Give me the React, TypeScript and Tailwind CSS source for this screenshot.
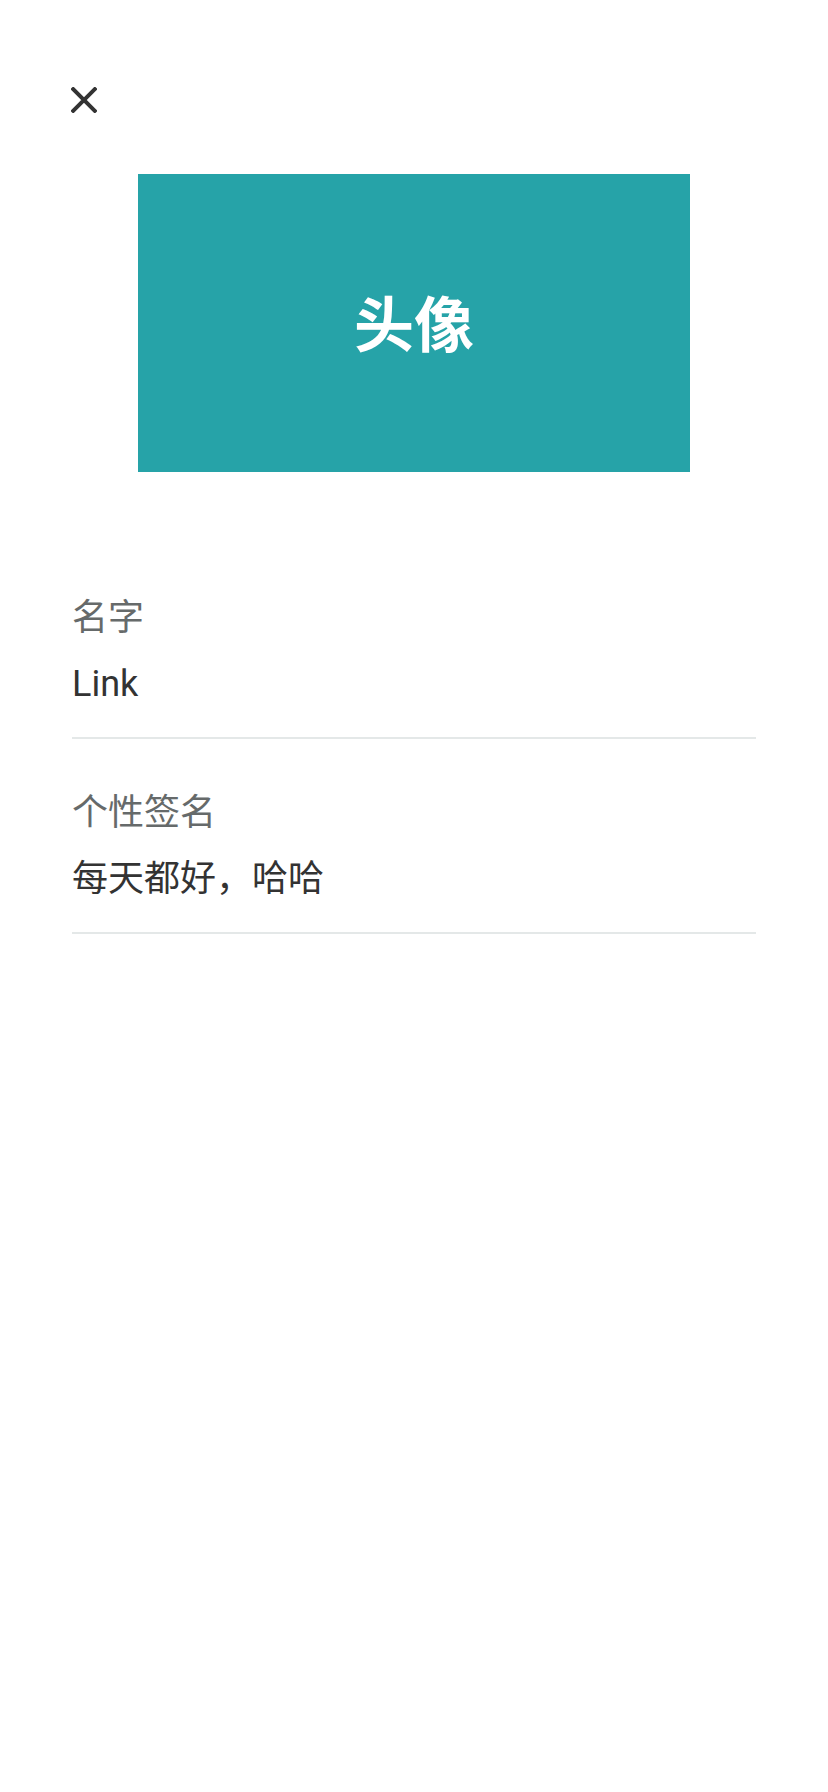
import React from "react";

const fields = [
  { label: "名字", value: "Link" },
  { label: "个性签名", value: "每天都好，哈哈" },
];

export default function App() {
  return (
    <div className="min-h-[1792px] w-full bg-white">
      <div className="font-['Roboto','Noto_Sans_CJK_SC',sans-serif]">
        <div className="pl-[71px] pt-[87px]">
          <svg width="26" height="26" viewBox="0 0 26 26" className="block">
            <path d="M2.2 2.2 L23.8 23.8 M23.8 2.2 L2.2 23.8" stroke="#333333" strokeWidth="4" strokeLinecap="square" fill="none" />
          </svg>
        </div>
        <div className="mx-auto mt-[61px] flex h-[298px] w-[552px] items-center justify-center bg-[#26a3a8]">
          <span className="mb-[4px] font-['Noto_Sans_CJK_SC',sans-serif] text-[60px] leading-[60px] font-bold text-white">头像</span>
        </div>
        <div className="mt-[72px] px-[72px]">
          {fields.map((f) => (
            <div key={f.label} className="border-b-2 border-[#e4e8e8] pt-[56px] pb-[35px]">
              <div className="text-[36px] leading-[36px] text-[#666a6a]">{f.label}</div>
              <div className="mt-[30px] text-[36px] leading-[36px] text-[#333333]">{f.value}</div>
            </div>
          ))}
        </div>
      </div>
    </div>
  );
}
